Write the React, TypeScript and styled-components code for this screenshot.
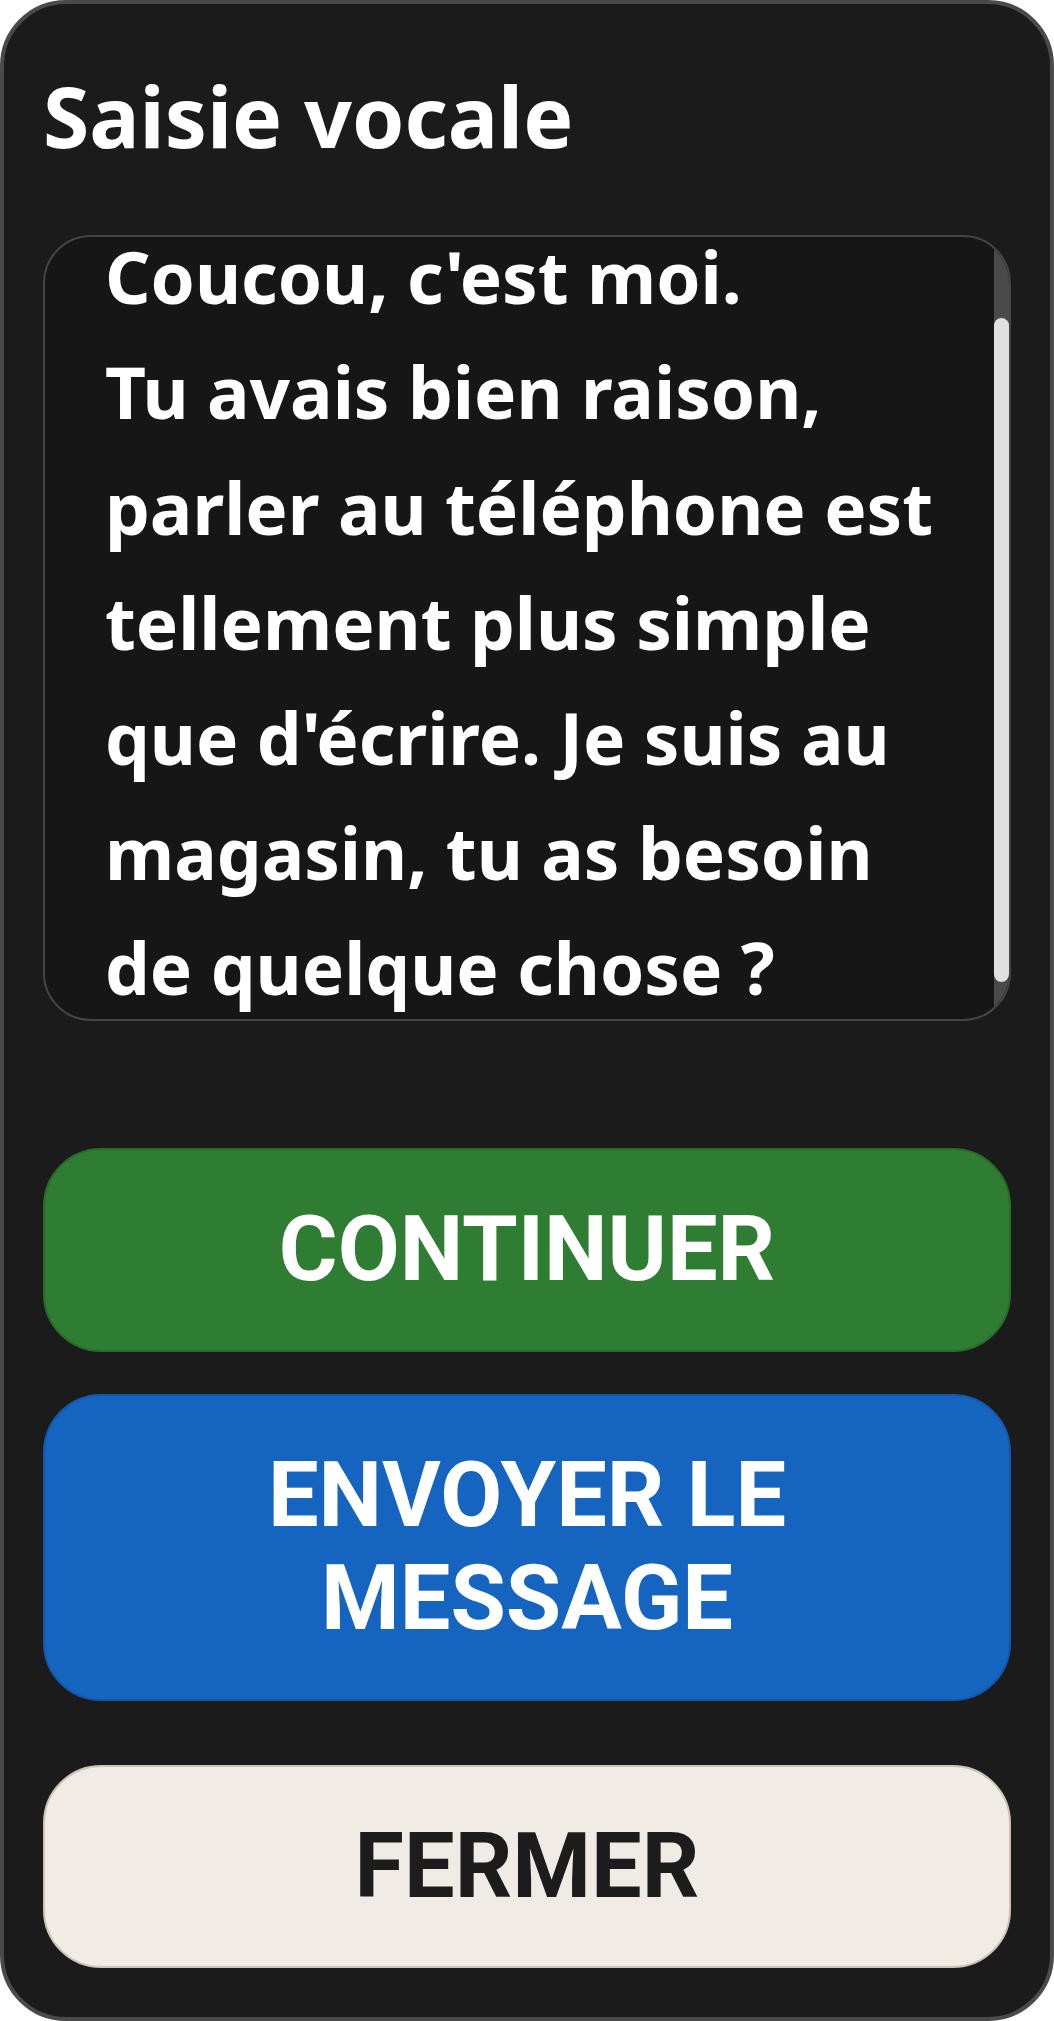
import { useLayoutEffect, useRef, useState } from 'react';
import styled, { createGlobalStyle } from 'styled-components';

const GlobalStyle = createGlobalStyle`
  html, body {
    margin: 0;
    padding: 0;
    background: #ffffff;
  }
  * {
    box-sizing: border-box;
  }
`;

const StyledPanel = styled.div`
  display: flex;
  flex-direction: column;
  height: 100vh;
  padding: 57px 39px 0;
  background: #1b1b1b;
  border: 4px solid #4a4a4a;
  border-radius: 66px;
  font-family: 'Noto Sans', 'Open Sans', sans-serif;
`;

const StyledTitle = styled.h1`
  margin: 0;
  color: #ffffff;
  font-size: 84px;
  font-weight: 700;
  line-height: 1.3;
`;

const StyledTranscriptFrame = styled.div`
  position: relative;
  margin-top: 65px;
  height: 786px;
  flex-shrink: 0;
  overflow: hidden;
  background: #161616;
  border: 2px solid #454545;
  border-radius: 48px;
`;

const StyledTranscript = styled.div`
  height: 100%;
  overflow-y: auto;
  padding: 77px 54px 38px 60px;
  color: #ffffff;
  font-size: 71px;
  font-weight: 700;
  line-height: 115.2px;
  white-space: pre-line;
  scrollbar-width: none;

  &::-webkit-scrollbar {
    display: none;
  }
`;

const StyledScrollTrack = styled.div`
  position: absolute;
  top: 0;
  right: 0;
  bottom: 0;
  width: 15px;
  background: #4a4a4a;
`;

const StyledScrollThumb = styled.div`
  position: absolute;
  left: 0;
  right: 0;
  background: #e0e0e0;
  border-radius: 8px;
`;

const StyledActions = styled.div`
  display: flex;
  flex-direction: column;
  gap: 42px;
  margin-top: 127px;
`;

type Variant = 'continue' | 'send' | 'close';

const palette: Record<Variant, { bg: string; border: string; color: string }> = {
  continue: { bg: '#2e7d32', border: '#2a6b2d', color: '#ffffff' },
  send: { bg: '#1565c0', border: '#1457aa', color: '#ffffff' },
  close: { bg: '#f0ebe4', border: '#cbc3b3', color: '#1c1c1c' },
};

const StyledButton = styled.button<{ $variant: Variant }>`
  display: block;
  width: 100%;
  margin: 0;
  padding: 48px 40px;
  border: 2px solid ${({ $variant }) => palette[$variant].border};
  border-radius: 58px;
  background: ${({ $variant }) => palette[$variant].bg};
  color: ${({ $variant }) => palette[$variant].color};
  font-family: Roboto, 'Liberation Sans', sans-serif;
  font-size: 90px;
  font-weight: 700;
  line-height: 1.15;
  text-align: center;
  text-transform: uppercase;
  cursor: pointer;
`;

const StyledCloseButton = styled(StyledButton)`
  margin-top: 22px;
`;

const message =
  "Coucou, c'est moi.\nTu avais bien raison, parler au téléphone est tellement plus simple que d'écrire. Je suis au magasin, tu as besoin de quelque chose ?";

export default function App() {
  const transcriptRef = useRef<HTMLDivElement>(null);
  const [thumb, setThumb] = useState({ top: 0, height: 0 });

  useLayoutEffect(() => {
    const el = transcriptRef.current;
    if (!el) return;
    el.scrollTop = 95;
    const update = () => {
      const ratio = el.clientHeight / el.scrollHeight;
      setThumb({ top: el.scrollTop * ratio, height: el.clientHeight * ratio });
    };
    update();
    el.addEventListener('scroll', update);
    return () => el.removeEventListener('scroll', update);
  }, []);

  return (
    <>
      <GlobalStyle />
      <StyledPanel>
        <StyledTitle>Saisie vocale</StyledTitle>
        <StyledTranscriptFrame>
          <StyledTranscript ref={transcriptRef}>{message}</StyledTranscript>
          <StyledScrollTrack>
            <StyledScrollThumb style={{ top: thumb.top, height: thumb.height }} />
          </StyledScrollTrack>
        </StyledTranscriptFrame>
        <StyledActions>
          <StyledButton $variant="continue">Continuer</StyledButton>
          <StyledButton $variant="send">Envoyer le message</StyledButton>
          <StyledCloseButton $variant="close">Fermer</StyledCloseButton>
        </StyledActions>
      </StyledPanel>
    </>
  );
}
